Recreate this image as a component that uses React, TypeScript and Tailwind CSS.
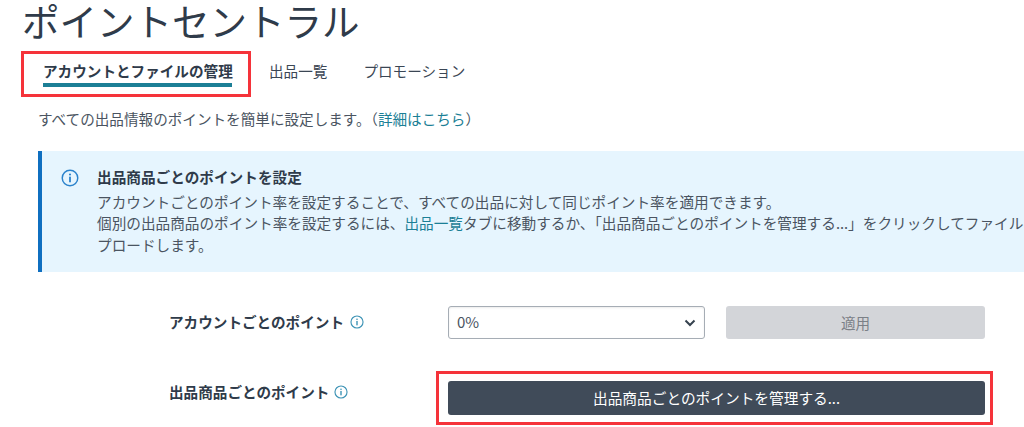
import React from 'react'

function InfoIcon({ size, color }: { size: number; color: string }) {
  return (
    <svg width={size} height={size} viewBox="0 0 16 16" fill="none" className="shrink-0">
      <circle cx="8" cy="8" r="6.9" stroke={color} strokeWidth="1.3" />
      <circle cx="8" cy="4.9" r="0.95" fill={color} />
      <rect x="7.2" y="6.8" width="1.6" height="5" fill={color} />
    </svg>
  )
}

export default function App() {
  return (
    <div className="w-[1024px] h-[427px] overflow-hidden bg-white text-[#0f1111] font-['Noto_Sans_CJK_JP','Noto_Sans',sans-serif]">
      {/* Page title */}
      <h1 className="ml-[22px] h-[43px] -mt-[8px] text-[37.5px] leading-[56px] font-normal text-[#2f3b4a] whitespace-nowrap">
        ポイントセントラル
      </h1>

      {/* Tabs */}
      <div className="flex items-start mt-[16px] ml-[21px] h-[46px]">
        <div className="w-[230px] h-[46px] border-[3px] border-[#f5333a] pl-[19px]">
          <div className="inline-block w-[189px] h-[33px] border-b-[4px] border-[#1c7f96] text-[14.6px] leading-[34px] font-bold text-[#2f3b4a] whitespace-nowrap">
            アカウントとファイルの管理
          </div>
        </div>
        <div className="flex gap-[36px] ml-[18px] text-[14.6px] leading-[39px] text-[#3b4654] whitespace-nowrap">
          <span>出品一覧</span>
          <span>プロモーション</span>
        </div>
      </div>

      <p className="mt-[11px] ml-[38px] text-[14.6px] leading-[22px] text-[#4a5461] whitespace-nowrap">
        すべての出品情報のポイントを簡単に設定します。（<span className="text-[#1c7f96]">詳細はこちら</span>）
      </p>

      {/* Info alert */}
      <div className="flex mt-[21px] ml-[38px] h-[121px] bg-[#e6f5fe] border-l-[4px] border-[#0f6fc0] pl-[19px] pt-[15px]">
        <div className="pt-[3px]">
          <InfoIcon size={18} color="#2b83cc" />
        </div>
        <div className="ml-[18px] text-[14.65px] leading-[21.5px] text-[#4a5461] whitespace-nowrap">
          <div className="font-bold text-[#2f3b4a]">出品商品ごとのポイントを設定</div>
          <div className="mt-[3px]">アカウントごとのポイント率を設定することで、すべての出品に対して同じポイント率を適用できます。</div>
          <div>
            個別の出品商品のポイント率を設定するには、<span className="text-[#1c7f96]">出品一覧</span>タブに移動するか、「出品商品ごとのポイントを管理する...」をクリックしてファイル
          </div>
          <div>プロードします。</div>
        </div>
      </div>

      {/* Account points row */}
      <div className="flex items-center mt-[34px] h-[33px]">
        <div className="flex items-center gap-[6px] w-[279px] ml-[169px] mb-[2px] text-[14.6px] leading-[22px] font-bold text-[#2f3b4a] whitespace-nowrap">
          アカウントごとのポイント
          <InfoIcon size={14} color="#3d93b5" />
        </div>
        <div className="flex items-center justify-between w-[257px] h-[33px] border border-[#a6adb5] rounded-[3px] bg-white pl-[8px] pr-[8px] text-[15px] text-[#4a5461] shadow-[inset_0_1px_2px_rgba(0,0,0,0.08)]">
          <span>0%</span>
          <svg width="12" height="8" viewBox="0 0 12 8" fill="none">
            <path d="M1.5 1.5 6 6l4.5-4.5" stroke="#36424f" strokeWidth="2" />
          </svg>
        </div>
        <div className="flex items-center justify-center w-[259px] h-[33px] ml-[21px] rounded-[3px] bg-[#d3d5d9] text-[14.6px] text-[#7b8087]">
          適用
        </div>
      </div>

      {/* Per listing row */}
      <div className="flex items-start mt-[32px]">
        <div className="flex items-center gap-[5px] w-[267px] ml-[169px] mt-[10px] text-[14.6px] leading-[22px] font-bold text-[#2f3b4a] whitespace-nowrap">
          出品商品ごとのポイント
          <InfoIcon size={14} color="#3d93b5" />
        </div>
        <div className="w-[557px] h-[54px] border-[3px] border-[#f5333a] pt-[7px] pl-[9px]">
          <div className="flex items-center justify-center w-[537px] h-[34px] rounded-[3px] bg-[#404b59] text-[14.7px] text-white whitespace-nowrap">
            出品商品ごとのポイントを管理する...
          </div>
        </div>
      </div>
    </div>
  )
}
